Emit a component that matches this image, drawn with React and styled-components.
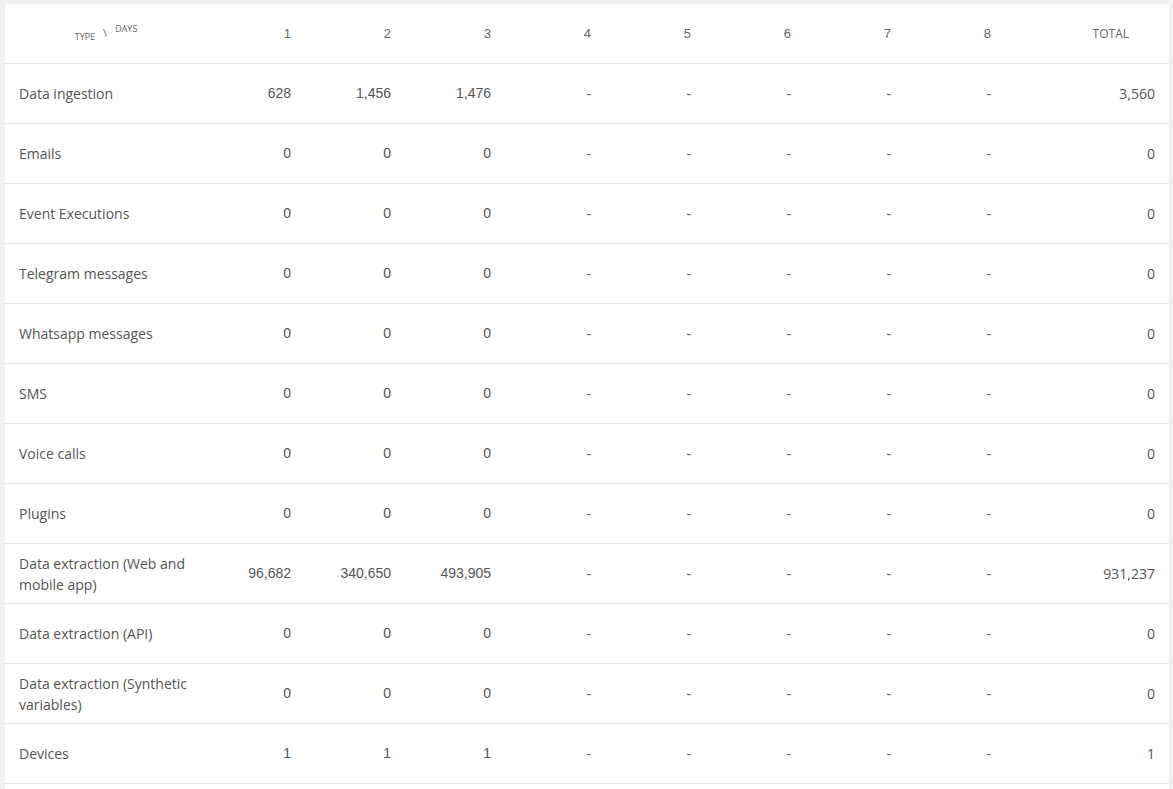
import React from "react";
import styled, { createGlobalStyle } from "styled-components";

const Global = createGlobalStyle`
  html, body { margin: 0; padding: 0; background: #f1f1f1; }
  body { font-family: "Open Sans", "Liberation Sans", sans-serif; color: #555; }
`;

const Page = styled.div`
  padding: 4px 4px 0 5px;
`;

const Card = styled.div`
  background: #fff;
  width: 1164px;
  min-height: 785px;
`;

const Table = styled.table`
  width: 1164px;
  border-collapse: collapse;
  table-layout: fixed;
`;

const HeadCell = styled.th`
  height: 59px;
  padding: 0 ${(p) => (p.$pr != null ? p.$pr : 8)}px 0 8px;
  border-bottom: 1px solid #e4e4e4;
  font-weight: 400;
  text-align: ${(p) => p.$align || "right"};
  vertical-align: middle;
  color: #666;
  font-family: ${(p) =>
    p.$sans ? `"Open Sans", sans-serif` : `"Liberation Sans", Arial, sans-serif`};
  font-size: ${(p) => (p.$sans ? "12px" : "13px")};
`;

const Corner = styled.span`
  font-family: "Open Sans", sans-serif;
  font-size: 9px;
  color: #666;
  text-transform: uppercase;
`;

const Slash = styled.span`
  display: inline-block;
  margin: 0 8px;
  font-size: 11px;
  position: relative;
  top: -1px;
`;

const Sup = styled.span`
  position: relative;
  top: -6px;
`;

const Sub = styled.span`
  position: relative;
  top: 2px;
`;

const Row = styled.tr``;

const Label = styled.td`
  height: 59px;
  padding: 0 8px 0 14px;
  border-bottom: 1px solid #e4e4e4;
  font-family: "Open Sans", sans-serif;
  font-size: 14px;
  line-height: 21px;
  color: #555;
  vertical-align: middle;
`;

const Num = styled.td`
  height: ${(p) => (p.$sans ? 59 : 57)}px;
  padding: 0 8px ${(p) => (p.$sans ? 0 : 2)}px 8px;
  border-bottom: 1px solid #e4e4e4;
  text-align: right;
  vertical-align: middle;
  color: #555;
  font-family: ${(p) =>
    p.$sans ? `"Open Sans", sans-serif` : `"Liberation Sans", Arial, sans-serif`};
  font-size: 14px;
`;

const Total = styled(Num)`
  padding-right: 14px;
`;

const rows = [
  ["Data ingestion", ["628", "1,456", "1,476"], "3,560"],
  ["Emails", ["0", "0", "0"], "0"],
  ["Event Executions", ["0", "0", "0"], "0"],
  ["Telegram messages", ["0", "0", "0"], "0"],
  ["Whatsapp messages", ["0", "0", "0"], "0"],
  ["SMS", ["0", "0", "0"], "0"],
  ["Voice calls", ["0", "0", "0"], "0"],
  ["Plugins", ["0", "0", "0"], "0"],
  ["Data extraction (Web and mobile app)", ["96,682", "340,650", "493,905"], "931,237"],
  ["Data extraction (API)", ["0", "0", "0"], "0"],
  ["Data extraction (Synthetic variables)", ["0", "0", "0"], "0"],
  ["Devices", ["1", "1", "1"], "1"],
];

export default function App() {
  return (
    <>
      <Global />
      <Page>
        <Card>
          <Table>
            <colgroup>
              <col style={{ width: 194 }} />
              {[1, 2, 3, 4, 5, 6, 7, 8].map((d) => (
                <col key={d} style={{ width: 100 }} />
              ))}
              <col style={{ width: 170 }} />
            </colgroup>
            <thead>
              <tr>
                <HeadCell $align="center" $pr={0}>
                  <Corner>
                    <Sub>Type</Sub>
                    <Slash>\</Slash>
                    <Sup>Days</Sup>
                  </Corner>
                </HeadCell>
                {[1, 2, 3, 4, 5, 6, 7, 8].map((d) => (
                  <HeadCell key={d}>{d}</HeadCell>
                ))}
                <HeadCell $sans $pr={40}>
                  TOTAL
                </HeadCell>
              </tr>
            </thead>
            <tbody>
              {rows.map(([label, vals, total]) => (
                <Row key={label}>
                  <Label>{label}</Label>
                  {vals.map((v, i) => (
                    <Num key={i}>{v}</Num>
                  ))}
                  {[4, 5, 6, 7, 8].map((d) => (
                    <Num key={d} $sans>
                      -
                    </Num>
                  ))}
                  <Total $sans>{total}</Total>
                </Row>
              ))}
            </tbody>
          </Table>
        </Card>
      </Page>
    </>
  );
}
